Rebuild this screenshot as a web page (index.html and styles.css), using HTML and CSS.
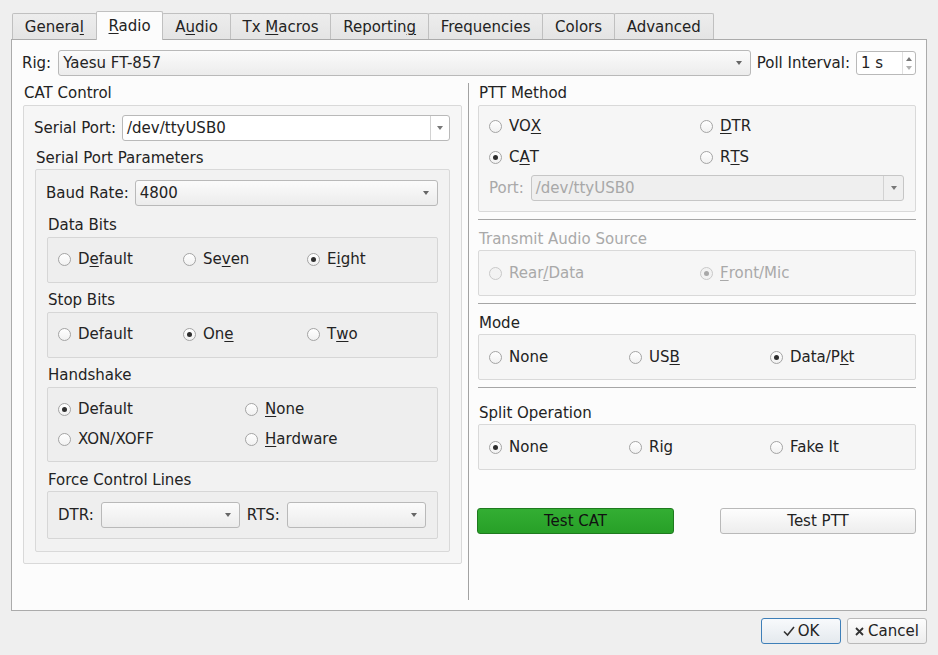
FILE: index.html
```html
<!DOCTYPE html>
<html lang="en">

<head>
    <meta charset="UTF-8">
    <title>Settings - Radio</title>
    <link rel="stylesheet" href="styles.css">
</head>

<body>
    <div class="dialog">
        <div class="tabs">
            <div class="tab">Genera<u>l</u></div>
            <div class="tab active"><u>R</u>adio</div>
            <div class="tab">A<u>u</u>dio</div>
            <div class="tab">Tx <u>M</u>acros</div>
            <div class="tab">Reportin<u>g</u></div>
            <div class="tab">Frequencies</div>
            <div class="tab">Colors</div>
            <div class="tab">Advanced</div>
        </div>

        <div class="pane">
            <div class="rig-row">
                <span>Rig:</span>
                <div class="combo rig-combo"><span>Yaesu FT-857</span><i class="arrow"></i></div>
                <span>Poll Interval:</span>
                <div class="spin">
                    <span>1 s</span>
                    <div class="spin-btns"><i class="up"></i><i class="down"></i></div>
                </div>
            </div>

            <div class="main">
                <!-- left column: CAT control -->
                <div class="col-left">
                    <div class="title top">CAT Control</div>
                    <div class="frame lvl1 cat">
                        <div class="field-row">
                            <span>Serial Port:</span>
                            <div class="combo edit"><span class="value">/dev/ttyUSB0</span><span class="drop"><i class="arrow"></i></span></div>
                        </div>

                        <div class="sub spp-group">
                            <div class="title low">Serial Port Parameters</div>
                            <div class="frame lvl2 spp">
                                <div class="field-row">
                                    <span>Baud Rate:</span>
                                    <div class="combo"><span>4800</span><i class="arrow"></i></div>
                                </div>

                                <div class="sub first">
                                    <div class="title">Data Bits</div>
                                    <div class="frame lvl3 radios cols3">
                                        <span class="radio"><i class="ind"></i>D<u>e</u>fault</span>
                                        <span class="radio"><i class="ind"></i>Se<u>v</u>en</span>
                                        <span class="radio on"><i class="ind"></i>E<u>i</u>ght</span>
                                    </div>
                                </div>

                                <div class="sub">
                                    <div class="title">Stop Bits</div>
                                    <div class="frame lvl3 radios cols3">
                                        <span class="radio"><i class="ind"></i>Default</span>
                                        <span class="radio on"><i class="ind"></i>On<u>e</u></span>
                                        <span class="radio"><i class="ind"></i>T<u>w</u>o</span>
                                    </div>
                                </div>

                                <div class="sub">
                                    <div class="title">Handshake</div>
                                    <div class="frame lvl3 radios cols2 hand">
                                        <span class="radio on"><i class="ind"></i>Default</span>
                                        <span class="radio"><i class="ind"></i><u>N</u>one</span>
                                        <span class="radio"><i class="ind"></i>XON/XOFF</span>
                                        <span class="radio"><i class="ind"></i><u>H</u>ardware</span>
                                    </div>
                                </div>

                                <div class="sub force">
                                    <div class="title low">Force Control Lines</div>
                                    <div class="frame lvl3 lines">
                                        <span>DTR:</span>
                                        <div class="combo"><span></span><i class="arrow"></i></div>
                                        <span>RTS:</span>
                                        <div class="combo"><span></span><i class="arrow"></i></div>
                                    </div>
                                </div>
                            </div>
                        </div>
                    </div>
                </div>

                <div class="vsep"></div>

                <!-- right column -->
                <div class="col-right">
                    <div class="title top">PTT Method</div>
                    <div class="frame lvl1 ptt">
                        <div class="ptt-grid">
                            <span class="radio"><i class="ind"></i>VO<u>X</u></span>
                            <span class="radio"><i class="ind"></i><u>D</u>TR</span>
                            <span class="radio on"><i class="ind"></i>C<u>A</u>T</span>
                            <span class="radio"><i class="ind"></i>R<u>T</u>S</span>
                        </div>
                        <div class="field-row port-row">
                            <span class="muted">Port:</span>
                            <div class="combo edit disabled"><span class="value">/dev/ttyUSB0</span><span class="drop"><i class="arrow"></i></span></div>
                        </div>
                    </div>

                    <div class="hline"></div>

                    <div class="title muted after-line">Transmit Audio Source</div>
                    <div class="frame lvl1 radios cols2w">
                        <span class="radio off"><i class="ind"></i>Rear<u>/</u>Data</span>
                        <span class="radio on off"><i class="ind"></i><u>F</u>ront/Mic</span>
                    </div>

                    <div class="hline"></div>

                    <div class="title after-line">Mode</div>
                    <div class="frame lvl1 radios cols3w">
                        <span class="radio"><i class="ind"></i>None</span>
                        <span class="radio"><i class="ind"></i>US<u>B</u></span>
                        <span class="radio on"><i class="ind"></i>Data/P<u>k</u>t</span>
                    </div>

                    <div class="hline"></div>

                    <div class="title split-title">Split Operation</div>
                    <div class="frame lvl1 radios cols3w">
                        <span class="radio on"><i class="ind"></i>None</span>
                        <span class="radio"><i class="ind"></i>Rig</span>
                        <span class="radio"><i class="ind"></i>Fake It</span>
                    </div>

                    <div class="test-row">
                        <button class="btn test-cat">Test CAT</button>
                        <button class="btn test-ptt">Test PTT</button>
                    </div>
                </div>
            </div>
        </div>

        <div class="footer">
            <button class="btn ok">
                <svg width="12" height="12" viewBox="0 0 12 12"><polyline points="1,6.5 4.5,10 11,2" fill="none" stroke="#333" stroke-width="1.6"/></svg>OK
            </button>
            <button class="btn cancel">
                <svg width="9" height="9" viewBox="0 0 9 9"><path d="M1 1L8 8M8 1L1 8" stroke="#333" stroke-width="1.8"/></svg>Cancel
            </button>
        </div>
    </div>
</body>

</html>
```

FILE: styles.css
```css
body {
    margin: 0;
    background-color: #efefef;
    font-family: "DejaVu Sans", "Liberation Sans", sans-serif;
    font-size: 15px;
    color: #232323;
}

u {
    text-decoration-thickness: 1px;
    text-underline-offset: 2px;
}

.dialog {
    width: 938px;
    height: 655px;
    box-sizing: border-box;
    padding: 11px 11px 0;
}

/* tabs */
.tabs {
    display: flex;
    align-items: flex-end;
    height: 28px;
    padding-left: 1px;
}

.tab {
    height: 26px;
    box-sizing: border-box;
    padding: 1px 11.8px 0;
    line-height: 24px;
    border: 1px solid #c0c0c0;
    border-bottom: none;
    border-radius: 2px 2px 0 0;
    background: linear-gradient(#ededed, #e4e4e4);
    margin-left: -1px;
    white-space: nowrap;
}

.tab:first-child {
    margin-left: 0;
}

.tab.active {
    height: 29px;
    padding-top: 2px;
    background: #fcfcfc;
    margin-bottom: -1px;
    position: relative;
    z-index: 1;
}

.pane {
    height: 572px;
    box-sizing: border-box;
    border: 1px solid #ababab;
    background-color: #fcfcfc;
    padding: 10px;
}

.rig-row {
    display: flex;
    align-items: center;
    height: 26px;
}

.rig-combo {
    flex: 1;
    margin: 0 6px 0 7px;
}

/* combo boxes */
.combo {
    display: flex;
    align-items: center;
    height: 26px;
    box-sizing: border-box;
    border: 1px solid #b9b9b9;
    border-radius: 3px;
    background: linear-gradient(#fbfbfb, #ececec);
    padding-left: 4px;
    white-space: nowrap;
}

.arrow {
    width: 0;
    height: 0;
    border-left: 3.5px solid transparent;
    border-right: 3.5px solid transparent;
    border-top: 4px solid #666;
    margin-left: auto;
    margin-right: 8px;
}

.combo.edit {
    background: #fff;
    padding-left: 4px;
}

.combo.edit .value {
    flex: 1;
}

.combo.edit .drop {
    display: flex;
    align-items: center;
    justify-content: center;
    width: 18px;
    height: 100%;
    border-left: 1px solid #d2d2d2;
}

.combo.edit .drop .arrow {
    margin: 0;
    border-top-color: #777;
}

.combo.disabled {
    background: #efefef;
    border-color: #c6c6c6;
    color: #a8a8a8;
}

.combo.disabled .drop {
    width: 19px;
}

.combo.disabled .arrow {
    border-top-color: #b4b4b4;
}

.spin {
    display: flex;
    align-items: center;
    width: 60px;
    height: 24px;
    box-sizing: border-box;
    margin-left: 6px;
    border: 1px solid #b9b9b9;
    border-radius: 3px;
    background: #fff;
    padding-left: 4px;
}

.spin span {
    flex: 1;
}

.spin-btns {
    display: flex;
    flex-direction: column;
    align-items: center;
    justify-content: center;
    gap: 5px;
    width: 12px;
    height: 100%;
    border-left: 1px solid #e0e0e0;
}

.spin-btns .up,
.spin-btns .down {
    width: 0;
    height: 0;
    border-left: 3px solid transparent;
    border-right: 3px solid transparent;
}

.spin-btns .up {
    border-bottom: 4px solid #777;
}

.spin-btns .down {
    border-top: 4px solid #b0b0b0;
}

/* main columns */
.main {
    display: flex;
    height: 517px;
    margin-top: 7px;
}

.col-left {
    width: 440px;
    box-sizing: border-box;
    padding-left: 1px;
}

.vsep {
    width: 1px;
    background-color: #a2a2a2;
    margin: 0 9px 0 6px;
}

.col-right {
    flex: 1;
}

.title {
    height: 18px;
    line-height: 18px;
    padding-left: 1px;
    margin-bottom: 3px;
    white-space: nowrap;
}

.title.low {
    margin-bottom: 2px;
}

.title.top {
    margin-top: 1px;
}

.title.after-line {
    margin-top: 10px;
    margin-bottom: 2px;
}

.title.split-title {
    margin-top: 16px;
    margin-bottom: 2px;
}

.muted {
    color: #a9a9a9;
}

.frame {
    border: 1px solid #d9d9d9;
    border-radius: 2px;
}

.lvl1 {
    background-color: #f6f6f6;
}

.lvl2 {
    background-color: #f2f2f2;
}

.lvl3 {
    background-color: #eeeeee;
    border-color: #d6d6d6;
}

.field-row {
    display: flex;
    align-items: center;
    gap: 6px;
    height: 26px;
}

.field-row .combo {
    flex: 1;
}

.cat {
    padding: 9px 11px 11px 10px;
}

.sub {
    margin-left: 1px;
    margin-top: 8px;
}

.spp-group {
    margin-top: 8px;
}

.sub.first {
    margin-top: 10px;
}

.sub.force {
    margin-top: 9px;
}

.spp {
    padding: 10px 11px 12px 10px;
}

/* radio groups */
.radios {
    display: grid;
    align-items: center;
    padding: 10px 10px 12px;
}

.cols3 {
    grid-template-columns: 125px 124px 1fr;
}

.cols2 {
    grid-template-columns: 187px 1fr;
}

.hand {
    padding-top: 10px;
    padding-bottom: 11px;
    row-gap: 8px;
}

.cols2w {
    grid-template-columns: 211px 1fr;
    padding-top: 11px;
    padding-bottom: 11px;
}

.cols3w {
    grid-template-columns: 140px 141px 1fr;
    padding-top: 11px;
    padding-bottom: 11px;
}

.radio {
    display: flex;
    align-items: center;
    height: 22px;
    white-space: nowrap;
}

.ind {
    display: flex;
    align-items: center;
    justify-content: center;
    width: 13px;
    height: 13px;
    box-sizing: border-box;
    border: 1px solid #a4a4a4;
    border-radius: 50%;
    background: linear-gradient(#ffffff, #f1f1f1);
    margin-right: 7px;
}

.radio.on .ind::after {
    content: "";
    width: 5px;
    height: 5px;
    border-radius: 50%;
    background-color: #2e2e2e;
}

.radio.off {
    color: #a9a9a9;
}

.radio.off .ind {
    border-color: #c9c9c9;
    background: #f2f2f2;
}

.radio.off.on .ind::after {
    background-color: #a8a8a8;
}

.lines {
    display: flex;
    align-items: center;
    gap: 7px;
    padding: 10px 11px 10px 10px;
}

.lines .combo {
    flex: 1;
}

.ptt {
    padding: 9px 11px 10px 10px;
}

.ptt-grid {
    display: grid;
    grid-template-columns: 211px 1fr;
    row-gap: 9px;
}

.port-row {
    margin-top: 7px;
    gap: 7px;
}

.hline {
    height: 1px;
    background-color: #a6a6a6;
    margin-top: 7px;
}

/* buttons */
.btn {
    height: 26px;
    box-sizing: border-box;
    border: 1px solid #b9b9b9;
    border-radius: 3px;
    background: linear-gradient(#fdfdfd, #ededed);
    font-family: inherit;
    font-size: 15px;
    color: #232323;
    padding: 0;
}

.test-row {
    display: flex;
    justify-content: space-between;
    margin: 38px 0 0 -1px;
}

.test-cat {
    width: 197px;
    background: linear-gradient(#33ae33, #27a027);
    border-color: #1f7a1f;
    color: #111;
}

.test-ptt {
    width: 196px;
}

.footer {
    display: flex;
    justify-content: flex-end;
    gap: 6px;
    margin-top: 7px;
}

.ok,
.cancel {
    display: flex;
    align-items: center;
    justify-content: center;
    width: 80px;
}

.ok {
    gap: 3px;
    border-color: #3e7fb8;
    background: linear-gradient(#f8fafc, #e4e9ee);
}

.cancel {
    gap: 4px;
}
```
